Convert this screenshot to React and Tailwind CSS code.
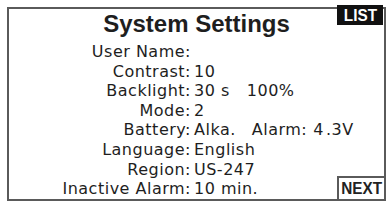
const rows = [
  { label: "User Name:", value: "" },
  { label: "Contrast:", value: "10" },
  { label: "Backlight:", value: "backlight" },
  { label: "Mode:", value: "2" },
  { label: "Battery:", value: "battery" },
  { label: "Language:", value: "English" },
  { label: "Region:", value: "US-247" },
  { label: "Inactive Alarm:", value: "10 min." },
];

function Value({ value }) {
  if (value === "backlight") {
    return (
      <span>
        30 s<span className="ml-[17px]">100%</span>
      </span>
    );
  }
  if (value === "battery") {
    return (
      <span>
        Alka.<span className="ml-[16px]">Alarm:</span>
        <span className="ml-[6px]">4</span>
        <span className="ml-[2px]">.3V</span>
      </span>
    );
  }
  return <span>{value}</span>;
}

export default function App() {
  return (
    <div className="w-[390px] h-[204px] bg-white pt-[7px] pl-[7px]">
      {/* LCD frame */}
      <div className="relative w-[379px] h-[194px] border-2 border-[#5a5a5a] text-[#1e1e1e]">
        {/* LIST tab */}
        <div
          className="absolute right-[1px] top-[-4px] w-[46px] h-[20px] bg-[#111] text-white flex items-center justify-center text-[17px] font-bold leading-none"
          style={{ fontFamily: '"Liberation Sans", Arial, sans-serif' }}
        >
          <span className="scale-x-90">LIST</span>
        </div>

        {/* NEXT tab */}
        <div
          className="absolute right-0 bottom-0 w-[47px] h-[23px] border-t-2 border-l-2 border-[#5a5a5a] flex items-center justify-center text-[17px] font-bold leading-none text-[#222]"
          style={{ fontFamily: '"Liberation Sans", Arial, sans-serif' }}
        >
          <span className="scale-x-90">NEXT</span>
        </div>

        <h1
          className="text-center text-[24px] font-bold leading-[28px] pt-[1px]"
          style={{ fontFamily: '"Liberation Sans", Arial, sans-serif' }}
        >
          System Settings
        </h1>

        <div
          className="mt-[4px] grid grid-cols-[182px_1fr] gap-x-[3px] text-[16px] leading-[19.6px] tracking-[0.5px] whitespace-pre"
          style={{ fontFamily: '"DejaVu Sans", sans-serif' }}
        >
          {rows.map((r) => (
            <div key={r.label} className="contents">
              <div className="text-right">{r.label}</div>
              <div>
                <Value value={r.value} />
              </div>
            </div>
          ))}
        </div>
      </div>
    </div>
  );
}
